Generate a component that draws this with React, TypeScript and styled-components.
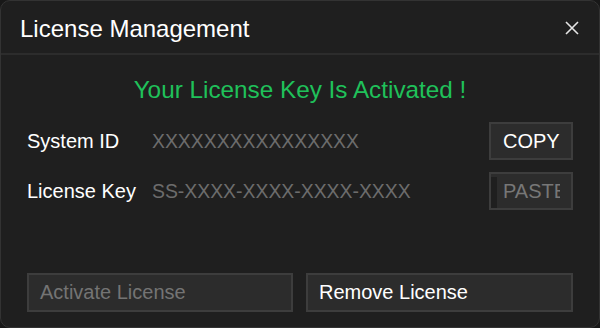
import React from "react";
import styled, { createGlobalStyle } from "styled-components";

const Global = createGlobalStyle`
  html, body {
    margin: 0;
    padding: 0;
    background: #181818;
  }
  body {
    font-family: "Liberation Sans", Arial, sans-serif;
  }
  * { box-sizing: border-box; }
`;

const Dialog = styled.div`
  width: 600px;
  height: 328px;
  background: #1f1f1f;
  border: 1px solid #333;
  border-radius: 10px;
  display: flex;
  flex-direction: column;
  overflow: hidden;
  color: #fff;
`;

const Header = styled.div`
  height: 54px;
  flex: none;
  padding: 0 19px 0 19px;
  display: flex;
  align-items: center;
  justify-content: space-between;
  border-bottom: 2px solid #2c2c2c;
  h1 {
    margin: 0;
    font-size: 24px;
    font-weight: normal;
    line-height: 28px;
    padding-top: 4px;
  }
`;

const Close = styled.button`
  background: none;
  border: none;
  padding: 0;
  width: 16px;
  height: 16px;
  display: flex;
  align-items: center;
  justify-content: center;
  color: #e4e4e4;
  cursor: pointer;
  margin-top: 1px;
`;

const Body = styled.div`
  flex: 1;
  padding: 21px 26px 15px 26px;
  display: flex;
  flex-direction: column;
`;

const Status = styled.div`
  text-align: center;
  color: #1fc15a;
  font-size: 24.3px;
  line-height: 28px;
  margin-bottom: 18px;
`;

const Row = styled.div<{ $gap?: number }>`
  display: grid;
  grid-template-columns: 125px 1fr 84px;
  align-items: center;
  height: 38px;
  margin-bottom: ${(p) => p.$gap ?? 0}px;
`;

const Label = styled.div`
  font-size: 20px;
  line-height: 24px;
`;

const Value = styled.div`
  font-size: 19.4px;
  line-height: 24px;
  color: #6c6c6c;
`;

const SideButton = styled.button<{ $muted?: boolean }>`
  position: relative;
  height: 38px;
  width: 84px;
  background: #2c2c2c;
  border: 2px solid #3d3d3d;
  color: ${(p) => (p.$muted ? "#777" : "#fff")};
  font-family: inherit;
  font-size: 20px;
  padding: 0 12px;
  text-align: left;
  overflow: hidden;
  white-space: nowrap;
  cursor: pointer;
  span {
    display: block;
    overflow: hidden;
  }
`;

const Notch = styled.div`
  position: absolute;
  left: -2px;
  top: 3px;
  width: 8px;
  bottom: -2px;
  background: #1f1f1f;
`;

const Footer = styled.div`
  margin-top: auto;
  display: grid;
  grid-template-columns: 266px 1fr;
  gap: 13px;
`;

const WideButton = styled.button<{ $disabled?: boolean }>`
  height: 39px;
  background: #2c2c2c;
  border: 2px solid #3d3d3d;
  color: ${(p) => (p.$disabled ? "#747474" : "#fff")};
  font-family: inherit;
  font-size: 20px;
  text-align: left;
  padding: 0 11px;
  cursor: ${(p) => (p.$disabled ? "default" : "pointer")};
`;

export default function App() {
  return (
    <>
      <Global />
      <Dialog>
        <Header>
          <h1>License Management</h1>
          <Close aria-label="Close">
            <svg width="14" height="14" viewBox="0 0 14 14">
              <path d="M1 1 L13 13 M13 1 L1 13" stroke="currentColor" strokeWidth="1.6" />
            </svg>
          </Close>
        </Header>
        <Body>
          <Status>Your License Key Is Activated !</Status>
          <Row $gap={12}>
            <Label>System ID</Label>
            <Value>XXXXXXXXXXXXXXXX</Value>
            <SideButton>COPY</SideButton>
          </Row>
          <Row>
            <Label>License Key</Label>
            <Value>SS-XXXX-XXXX-XXXX-XXXX</Value>
            <SideButton $muted>
              <span style={{ width: 57 }}>PASTE</span>
              <Notch />
            </SideButton>
          </Row>
          <Footer>
            <WideButton $disabled>Activate License</WideButton>
            <WideButton>Remove License</WideButton>
          </Footer>
        </Body>
      </Dialog>
    </>
  );
}
